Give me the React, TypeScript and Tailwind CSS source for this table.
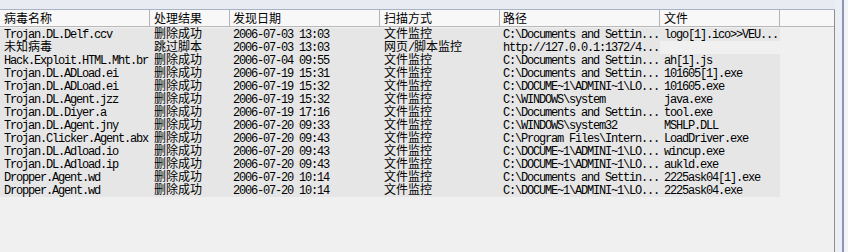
import React from "react";

const rows: string[][] = [
  ["Trojan.DL.Delf.ccv", "删除成功", "2006-07-03 13:03", "文件监控", "C:\\Documents and Settin...", "logo[1].ico>>VEU..."],
  ["未知病毒", "跳过脚本", "2006-07-03 13:03", "网页/脚本监控", "http://127.0.0.1:1372/4...", ""],
  ["Hack.Exploit.HTML.Mht.br", "删除成功", "2006-07-04 09:55", "文件监控", "C:\\Documents and Settin...", "ah[1].js"],
  ["Trojan.DL.ADLoad.ei", "删除成功", "2006-07-19 15:31", "文件监控", "C:\\Documents and Settin...", "101605[1].exe"],
  ["Trojan.DL.ADLoad.ei", "删除成功", "2006-07-19 15:32", "文件监控", "C:\\DOCUME~1\\ADMINI~1\\LO...", "101605.exe"],
  ["Trojan.DL.Agent.jzz", "删除成功", "2006-07-19 15:32", "文件监控", "C:\\WINDOWS\\system", "java.exe"],
  ["Trojan.DL.Diyer.a", "删除成功", "2006-07-19 17:16", "文件监控", "C:\\Documents and Settin...", "tool.exe"],
  ["Trojan.DL.Agent.jny", "删除成功", "2006-07-20 09:33", "文件监控", "C:\\WINDOWS\\system32", "MSHLP.DLL"],
  ["Trojan.Clicker.Agent.abx", "删除成功", "2006-07-20 09:43", "文件监控", "C:\\Program Files\\Intern...", "LoadDriver.exe"],
  ["Trojan.DL.Adload.io", "删除成功", "2006-07-20 09:43", "文件监控", "C:\\DOCUME~1\\ADMINI~1\\LO...", "wincup.exe"],
  ["Trojan.DL.Adload.ip", "删除成功", "2006-07-20 09:43", "文件监控", "C:\\DOCUME~1\\ADMINI~1\\LO...", "aukld.exe"],
  ["Dropper.Agent.wd", "删除成功", "2006-07-20 10:14", "文件监控", "C:\\Documents and Settin...", "2225ask04[1].exe"],
  ["Dropper.Agent.wd", "删除成功", "2006-07-20 10:14", "文件监控", "C:\\DOCUME~1\\ADMINI~1\\LO...", "2225ask04.exe"],
];

const headers = ["病毒名称", "处理结果", "发现日期", "扫描方式", "路径", "文件"];
const widths = ["w-[150px]", "w-[80px]", "w-[150px]", "w-[120px]", "w-[160px]", "w-[120px]"];
const pads = ["pl-[4px]", "pl-[4px]", "pl-[3px]", "pl-[4px]", "pl-[3px]", "pl-[4px]"];

function Mixed({ text }: { text: string }) {
  const parts = text.match(/[\u3000-\u9fff\uff00-\uffef]+|[^\u3000-\u9fff\uff00-\uffef]+/g) || [];
  return (
    <>
      {parts.map((p, i) =>
        /[\u3000-\u9fff]/.test(p) ? (
          <span key={i} className="block h-[13px] leading-[10.6px] font-['Noto_Sans_CJK_SC',sans-serif] text-[12px]">{p}</span>
        ) : (
          <span key={i} className="block h-[13px] leading-[14.6px] whitespace-pre font-['Liberation_Mono',monospace] text-[12px] tracking-[-1.2px]">{p}</span>
        )
      )}
    </>
  );
}

export default function App() {
  return (
    <div className="w-[848px] h-[252px] bg-[#eef0f4] flex overflow-hidden">
      <div className="w-[835px] flex flex-col">
        <div className="h-[10px] bg-[#e8ebf2] border-b border-[#a9b3c6]" />
        <div className="flex-1 bg-[#f0f0f0] border-r border-[#8e8e8e] flex flex-col">
          <div className="h-[17px] flex bg-[#f8f8f8] border-b border-[#b9b9b9]">
            {headers.map((h, i) => (
              <div
                key={i}
                className={`${widths[i]} ${pads[i]} h-full flex items-center border-r border-[#b4b4b4] text-black`}
              >
                <span className="h-[16px] leading-[15px] font-['Noto_Sans_CJK_SC',sans-serif] text-[12px]">{h}</span>
              </div>
            ))}
            <div className="flex-1 h-full" />
          </div>
          <div className="pt-[1px] flex flex-col">
            {rows.map((r, ri) => (
              <div key={ri} className="h-[13px] flex">
                {r.map((c, ci) => (
                  <div
                    key={ci}
                    className={`${widths[ci]} ${pads[ci]} h-[13px] flex items-start whitespace-nowrap text-black ${c ? "bg-[#e6e6e6]" : ""}`}
                  >
                    <Mixed text={c} />
                  </div>
                ))}
              </div>
            ))}
          </div>
        </div>
      </div>
      <div className="flex-1 flex">
        <div className="w-[7px] bg-[#eceef6]" />
        <div className="w-[2px] bg-[#8c96b4]" />
        <div className="flex-1 bg-[#f3f4f8]" />
      </div>
    </div>
  );
}
